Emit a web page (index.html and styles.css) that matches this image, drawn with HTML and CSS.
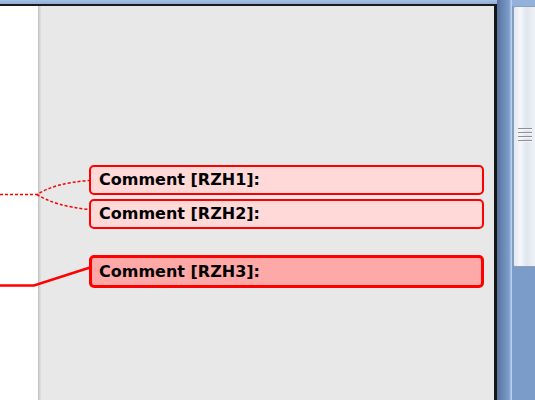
FILE: index.html
```html
<!DOCTYPE html>
<html>
<head>
<meta charset="utf-8">
<link rel="stylesheet" href="styles.css">
</head>
<body>
<div class="doc">
  <div class="topband"></div>
  <div class="frame">
    <div class="margin"></div>
    <div class="divider"></div>
    <div class="pane">
      <div class="comment light">Comment [RZH1]:</div>
      <div class="comment light">Comment [RZH2]:</div>
      <div class="comment active">Comment [RZH3]:</div>
    </div>
  </div>
</div>
<div class="strip"></div>
<div class="scroll">
  <div class="scroll-top"></div>
  <div class="thumb">
    <div class="grip"><span></span><span></span><span></span><span></span></div>
  </div>
</div>
<svg class="links" width="535" height="400" viewBox="0 0 535 400">
  <path d="M0 194.5 H37 Q55 183 89 180.5" fill="none" stroke="#ff0000" stroke-width="1.5" stroke-dasharray="3 2"/>
  <path d="M37 194.5 Q55 206 89 209.5" fill="none" stroke="#ff0000" stroke-width="1.5" stroke-dasharray="3 2"/>
  <path d="M0 285.5 H34 L90 267.5" fill="none" stroke="#ff0000" stroke-width="2.4"/>
</svg>
</body>
</html>
```
FILE: styles.css
```css
html, body {
  margin: 0;
  padding: 0;
}
body {
  width: 535px;
  height: 400px;
  overflow: hidden;
  display: flex;
  position: relative;
  background: #7b9cc8;
  font-family: "DejaVu Sans", Verdana, sans-serif;
}
.doc {
  width: 497px;
  display: flex;
  flex-direction: column;
  flex: none;
}
.topband {
  height: 4px;
  background: linear-gradient(#a7c0e2, #8eaed8);
  flex: none;
}
.frame {
  flex: 1;
  display: flex;
  border-top: 2px solid #1b1b1b;
  border-right: 3px solid #151515;
}
.margin {
  width: 38px;
  background: #ffffff;
  flex: none;
}
.divider {
  width: 3px;
  background: linear-gradient(90deg, #bdbdbd, #d4d4d4, #e0e0e0);
  flex: none;
}
.pane {
  flex: 1;
  background: #e8e8e8;
  padding: 159px 10px 0 48px;
  display: flex;
  flex-direction: column;
  gap: 4px;
}
.comment {
  box-sizing: border-box;
  height: 30px;
  border: 2px solid #ff0000;
  border-radius: 5px;
  padding-left: 8px;
  font-weight: bold;
  font-size: 16px;
  line-height: 26px;
  color: #000;
  white-space: nowrap;
}
.light {
  background: #ffd8d8;
}
.active {
  margin-top: 22px;
  height: 33px;
  border-width: 3px;
  background: #ffa8a8;
  line-height: 27px;
  padding-left: 7px;
}
.strip {
  width: 15px;
  flex: none;
  background: linear-gradient(90deg, #54709c 0%, #6886b4 35%, #7d9cc8 80%, #8fb0dc 88%, #c6d9f1 94%, #a8c2e6 100%);
}
.scroll {
  width: 23px;
  flex: none;
  display: flex;
  flex-direction: column;
}
.scroll-top {
  height: 6px;
  background: #93b1da;
}
.thumb {
  box-sizing: border-box;
  height: 261px;
  margin-left: 1px;
  border: 1px solid #8e9fb8;
  border-right: none;
  border-radius: 2px 0 0 2px;
  background: linear-gradient(90deg, #e4e9f0 0%, #f4f6fa 30%, #dfe6ef 60%, #eef2f7 100%);
  display: flex;
  justify-content: center;
  padding-top: 121px;
}
.grip {
  width: 14px;
  display: flex;
  flex-direction: column;
  gap: 2px;
}
.grip span {
  display: block;
  height: 1px;
  background: #8a8f98;
  border-bottom: 1px solid #f6f6f6;
}
.links {
  position: absolute;
  left: 0;
  top: 0;
  pointer-events: none;
}
```
